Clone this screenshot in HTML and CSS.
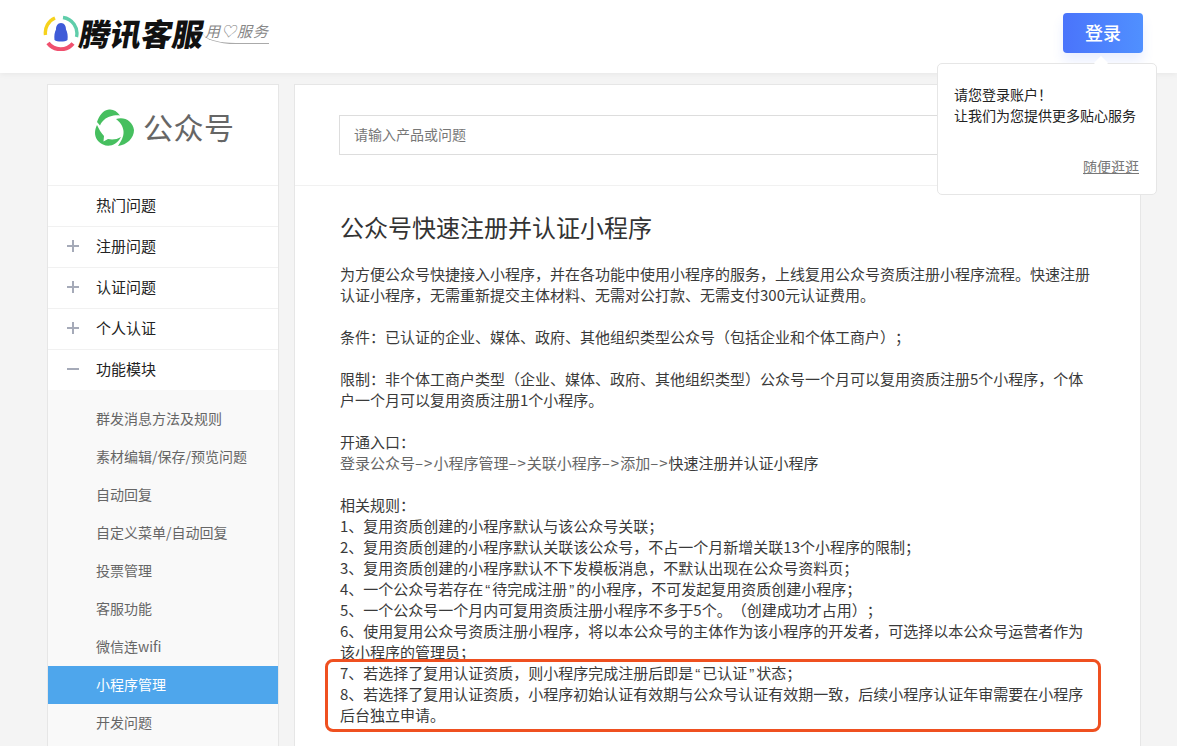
FILE: index.html
```html
<!DOCTYPE html>
<html lang="zh-CN">
<head>
    <meta charset="UTF-8">
    <meta name="viewport" content="width=device-width, initial-scale=1.0">
    <title>腾讯客服</title>
    <link rel="stylesheet" href="styles.css">
</head>
<body>
    <header class="header">
        <div class="brand">
            <svg class="brand-icon" viewBox="0 0 36 36" width="36" height="36">
                <path d="M12 3 A16 16 0 0 0 2.5 20" fill="none" stroke="#f6d21c" stroke-width="3.4"/>
                <path d="M20 2.5 A16 16 0 0 1 33.5 22" fill="none" stroke="#5fcdaa" stroke-width="3.4"/>
                <path d="M5 28 A16 16 0 0 0 30 28.5" fill="none" stroke="#f0506e" stroke-width="4"/>
                <path d="M18 8 C14.5 8 13 11 13 14.5 C11.5 17 11 21 11.5 25 C14 27 22 27 24.5 25 C25 21 24.5 17 23 14.5 C23 11 21.5 8 18 8 Z" fill="#3f5bd8"/>
            </svg>
            <span class="brand-name">腾讯客服</span>
            <span class="brand-slogan">用♡服务</span>
        </div>
        <button class="login-btn">登录</button>
    </header>

    <div class="popover">
        <p class="popover-text">请您登录账户！<br>让我们为您提供更多贴心服务</p>
        <a class="popover-link" href="#">随便逛逛</a>
    </div>

    <div class="page">
        <aside class="sidebar">
            <div class="product">
                <svg class="product-icon" viewBox="0 0 40 38" width="40" height="38">
                    <path d="M26 6.5 C23 2 19 0 15 0.5 C9 1 5 7 3 13 L6 16.5 C8 12 12 8.5 16 7.5 C19 6.5 23 6 26 6.5 Z" fill="#46bf5f"/>
                    <path d="M22 10 C30 7 39 12 40 21 C40 29 33 36 24 37 C27 32 30 28 29.5 22 C29 17 26 13 22 10 Z" fill="#46bf5f"/>
                    <path d="M3 16 C-1 24 1 32 9 35.5 C15 38.5 23 36 27 28 C23 30.5 18 31 14 30 L9.5 32.5 L10 27 C7 24 5 20 3 16 Z" fill="#46bf5f"/>
                </svg>
                <span class="product-name">公众号</span>
            </div>
            <ul class="menu">
                <li class="menu-item"><span class="menu-sign"></span>热门问题</li>
                <li class="menu-item"><span class="menu-sign plus"></span>注册问题</li>
                <li class="menu-item"><span class="menu-sign plus"></span>认证问题</li>
                <li class="menu-item"><span class="menu-sign plus"></span>个人认证</li>
                <li class="menu-item"><span class="menu-sign minus"></span>功能模块</li>
            </ul>
            <ul class="submenu">
                <li>群发消息方法及规则</li>
                <li>素材编辑/保存/预览问题</li>
                <li>自动回复</li>
                <li>自定义菜单/自动回复</li>
                <li>投票管理</li>
                <li>客服功能</li>
                <li>微信连wifi</li>
                <li class="active">小程序管理</li>
                <li>开发问题</li>
            </ul>
        </aside>

        <main class="main">
            <div class="search-band">
                <input class="search-input" type="text" placeholder="请输入产品或问题">
            </div>
            <article class="article">
                <h1 class="title">公众号快速注册并认证小程序</h1>
                <p>为方便公众号快捷接入小程序，并在各功能中使用小程序的服务，上线复用公众号资质注册小程序流程。快速注册认证小程序，无需重新提交主体材料、无需对公打款、无需支付300元认证费用。</p>
                <p>条件：已认证的企业、媒体、政府、其他组织类型公众号（包括企业和个体工商户）；</p>
                <p>限制：非个体工商户类型（企业、媒体、政府、其他组织类型）公众号一个月可以复用资质注册5个小程序，个体户一个月可以复用资质注册1个小程序。</p>
                <p>开通入口：<br><span class="muted">登录公众号<span class="arrow">–&gt;</span>小程序管理<span class="arrow">–&gt;</span>关联小程序<span class="arrow">–&gt;</span>添加<span class="arrow">–&gt;</span></span>快速注册并认证小程序</p>
                <p>相关规则：<br>
                1、复用资质创建的小程序默认与该公众号关联；<br>
                2、复用资质创建的小程序默认关联该公众号，不占一个月新增关联13个小程序的限制；<br>
                3、复用资质创建的小程序默认不下发模板消息，不默认出现在公众号资料页；<br>
                4、一个公众号若存在<span class="quote">“</span>待完成注册<span class="quote">”</span>的小程序，不可发起复用资质创建小程序；<br>
                5、一个公众号一个月内可复用资质注册小程序不多于5个。（创建成功才占用）；<br>
                6、使用复用公众号资质注册小程序，将以本公众号的主体作为该小程序的开发者，可选择以本公众号运营者作为该小程序的管理员；</p>
                <div class="highlight">
                    <p>7、若选择了复用认证资质，则小程序完成注册后即是<span class="quote">“</span>已认证<span class="quote">”</span>状态；<br>
                    8、若选择了复用认证资质，小程序初始认证有效期与公众号认证有效期一致，后续小程序认证年审需要在小程序后台独立申请。</p>
                    <div class="highlight-box"></div>
                </div>
            </article>
        </main>
    </div>
</body>
</html>
```

FILE: styles.css
```css
* {
    margin: 0;
    padding: 0;
    box-sizing: border-box;
}
html, body {
    height: 746px;
    overflow: hidden;
}
body {
    position: relative;
    font-family: "Noto Sans CJK SC", "Liberation Sans", sans-serif;
    font-size: 14px;
    color: #222;
    background-color: #f4f4f4;
    text-spacing-trim: space-all;
}
ul {
    list-style: none;
}

/* header */
.header {
    display: flex;
    justify-content: space-between;
    align-items: flex-start;
    height: 73px;
    padding: 13px 34px 0 43px;
    background-color: #fff;
    box-shadow: 0 1px 6px rgba(0, 0, 0, 0.06);
}
.brand {
    display: flex;
    align-items: center;
    height: 40px;
}
.brand-icon {
    flex: none;
}
.brand-name {
    margin-left: 1px;
    font-size: 31px;
    font-weight: 900;
    line-height: 40px;
    color: #111;
    transform: skewX(-10deg);
}
.brand-slogan {
    margin-left: -1px;
    padding: 0 0 3px 2px;
    border-bottom: 1px solid #aaa;
    border-bottom-left-radius: 50%;
    font-size: 15px;
    font-style: italic;
    line-height: 18px;
    letter-spacing: 1px;
    color: #888;
}
.login-btn {
    width: 80px;
    height: 40px;
    padding-bottom: 2px;
    border: none;
    border-radius: 4px;
    background: linear-gradient(90deg, #4a74fb, #5090ff);
    box-shadow: 0 8px 12px rgba(74, 116, 251, 0.12);
    color: #fff;
    font-family: inherit;
    font-size: 18px;
    font-weight: 500;
}

/* login popover */
.popover {
    position: absolute;
    top: 63px;
    left: 937px;
    width: 220px;
    height: 132px;
    padding: 20px 16px 0;
    background-color: #fff;
    border: 1px solid #e6e6e6;
    border-radius: 5px;
    z-index: 2;
}
.popover::before {
    content: "";
    position: absolute;
    top: -6px;
    left: 158px;
    width: 10px;
    height: 10px;
    background-color: #fff;
    transform: rotate(45deg);
}
.popover-text {
    font-size: 14px;
    line-height: 21px;
    color: #222;
}
.popover-link {
    position: absolute;
    right: 17px;
    bottom: 17px;
    font-size: 14px;
    line-height: 21px;
    color: #777;
}

/* page columns */
.page {
    display: flex;
    align-items: flex-start;
    gap: 15px;
    padding: 11px 36px 0 47px;
}
.sidebar {
    flex: none;
    width: 232px;
    background-color: #fff;
    border: 1px solid #e6e6e6;
}
.product {
    display: flex;
    align-items: flex-start;
    height: 100px;
    padding: 24px 0 0 46px;
}
.product-name {
    margin-left: 9px;
    font-size: 30px;
    line-height: 34px;
    letter-spacing: 0.5px;
    color: #666;
}
.menu-item {
    display: flex;
    align-items: center;
    height: 41px;
    padding-bottom: 3px;
    border-top: 1px solid #f1f1f1;
    font-size: 15px;
    color: #222;
}
.menu-sign {
    position: relative;
    width: 12px;
    height: 12px;
    margin: 1px 17px 0 19px;
}
.plus::before, .minus::before {
    content: "";
    position: absolute;
    top: 5px;
    left: 0;
    width: 12px;
    height: 2px;
    background-color: #a5aab8;
}
.plus::after {
    content: "";
    position: absolute;
    top: 0;
    left: 5px;
    width: 2px;
    height: 12px;
    background-color: #a5aab8;
}
.submenu {
    padding-top: 10px;
    background-color: #f9f9f9;
    padding-bottom: 10px;
}
.submenu li {
    height: 38px;
    padding-left: 48px;
    line-height: 36px;
    color: #666;
}
.submenu .active {
    background-color: #4ea6ec;
    color: #fff;
}

/* main column */
.main {
    flex: 1;
    height: 800px;
    background-color: #fff;
    border: 1px solid #e6e6e6;
}
.search-band {
    height: 101px;
    padding: 30px 44px 0;
    border-bottom: 1px solid #f1f1f1;
}
.search-input {
    width: 100%;
    height: 40px;
    padding: 0 14px 2px;
    border: 1px solid #ddd;
    font-family: inherit;
    font-size: 14px;
}
.search-input::placeholder {
    color: #777;
}
.article {
    padding: 24px 45px 0;
    font-size: 15px;
    line-height: 21px;
    color: #3a3a3a;
}
.article p {
    margin-bottom: 21px;
}
.title {
    margin-bottom: 19px;
    font-size: 24px;
    font-weight: 400;
    line-height: 34px;
    color: #333;
}
.muted {
    color: #666;
}
.arrow {
    letter-spacing: 1px;
}
.quote {
    padding: 0 2px;
    font-family: "Liberation Sans", sans-serif;
    line-height: 1;
}
.highlight {
    position: relative;
    margin-top: -21px;
}
.highlight-box {
    position: absolute;
    top: -3px;
    left: -15px;
    width: 776px;
    height: 73px;
    border: 3px solid #ef5020;
    border-radius: 8px;
}
```
